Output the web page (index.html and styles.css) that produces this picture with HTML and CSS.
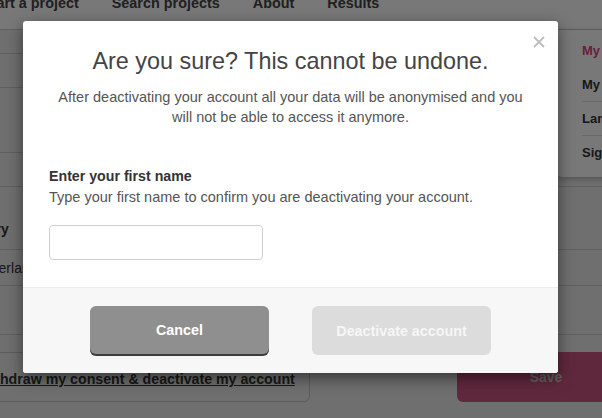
FILE: index.html
```html
<!DOCTYPE html>
<html lang="en">
<head>
<meta charset="utf-8">
<title>Deactivate account</title>
<link rel="stylesheet" href="styles.css">
</head>
<body>
<div class="page">
  <nav class="topnav">
    <a class="nav-item">Start a project</a>
    <a class="nav-item">Search projects</a>
    <a class="nav-item">About</a>
    <a class="nav-item">Results</a>
  </nav>
  <div class="rows">
    <div class="row h24"></div>
    <div class="row h34"></div>
    <div class="row h65"></div>
    <div class="row h34"></div>
    <div class="row h63 label-row"><span class="field-label">Country</span></div>
    <div class="row h36 value-row"><span class="field-value">Netherlands</span></div>
    <div class="row h49"></div>
  </div>
  <div class="actions">
    <div class="withdraw"><a class="withdraw-link">Withdraw my consent &amp; deactivate my account</a></div>
    <button class="save">Save</button>
  </div>
  <div class="menu">
    <div class="menu-item active">My profile</div>
    <div class="menu-item sep">My projects</div>
    <div class="menu-item sep">Language</div>
    <div class="menu-item">Sign out</div>
  </div>
</div>
<div class="backdrop"></div>
<div class="modal">
  <button class="close" aria-label="Close">
    <svg width="12" height="12" viewBox="0 0 12 12"><path d="M1 1 L11 11 M11 1 L1 11" stroke="#bdbdbd" stroke-width="1.8" fill="none"/></svg>
  </button>
  <div class="modal-body">
    <h2 class="modal-title">Are you sure? This cannot be undone.</h2>
    <p class="modal-text">After deactivating your account all your data will be anonymised and you will not be able to access it anymore.</p>
    <div class="form-group">
      <label class="form-label">Enter your first name</label>
      <div class="form-help">Type your first name to confirm you are deactivating your account.</div>
      <input class="form-input" type="text">
    </div>
  </div>
  <div class="modal-footer">
    <button class="btn btn-cancel">Cancel</button>
    <button class="btn btn-deactivate">Deactivate account</button>
  </div>
</div>
</body>
</html>
```
FILE: styles.css
```css
* { box-sizing: border-box; }
html, body { margin: 0; padding: 0; }
body {
  width: 602px;
  height: 418px;
  overflow: hidden;
  position: relative;
  font-family: "Liberation Sans", Arial, Helvetica, sans-serif;
  background: #eaeaea;
}
.page {
  margin-left: -45px;
  width: 700px;
  height: 418px;
  position: relative;
  background: #ececec;
}
.topnav {
  height: 30px;
  background: #ffffff;
  border-bottom: 1px solid #cfcfcf;
  display: flex;
  gap: 33px;
  padding-left: 27px;
}
.nav-item {
  font-weight: bold;
  font-size: 14.4px;
  line-height: 20px;
  color: #444;
  margin-top: -7px;
}
.rows { display: flex; flex-direction: column; }
.row { border-bottom: 1px solid #cccccc; }
.h24 { height: 24px; }
.h34 { height: 34px; }
.h65 { height: 65px; }
.h63 { height: 63px; }
.h36 { height: 36px; }
.h49 { height: 49px; }
.label-row { display: flex; align-items: flex-end; padding-bottom: 12px; }
.field-label { font-weight: bold; font-size: 14px; color: #333; }
.value-row { display: flex; align-items: center; padding-left: 14px; }
.field-value { font-size: 14px; color: #333; }
.actions {
  display: flex;
  align-items: flex-start;
  margin-top: 17px;
}
.withdraw {
  width: 355px;
  height: 50px;
  border: 1px solid #c4c4c4;
  border-radius: 6px;
  padding: 17px 0 0 22px;
}
.withdraw-link {
  font-weight: bold;
  font-size: 14.2px;
  color: #333;
  text-decoration: underline;
}
.save {
  margin-left: 147px;
  width: 178px;
  height: 50px;
  border: 0;
  border-radius: 6px;
  background: #cc5580;
  color: #cfcfcf;
  font-family: inherit;
  font-weight: bold;
  font-size: 14px;
}
.menu {
  position: absolute;
  left: 601px;
  top: 30px;
  width: 120px;
  height: 147px;
  background: #fff;
  border-radius: 0 0 0 6px;
  box-shadow: 0 2px 6px rgba(0,0,0,0.25);
  padding: 4px 0 0 26px;
}
.menu-item {
  font-weight: bold;
  font-size: 13px;
  color: #333;
  height: 34px;
  line-height: 34px;
}
.menu-item.active { color: #e0447e; }
.menu-item.sep { border-bottom: 1px solid #ddd; }
.backdrop {
  position: absolute;
  inset: 0;
  background: rgba(0,0,0,0.53);
}
.modal {
  position: absolute;
  left: 23px;
  top: 21px;
  width: 535px;
  height: 352px;
  background: #fff;
  border-radius: 3px;
  box-shadow: 0 5px 15px rgba(0,0,0,0.5);
  display: flex;
  flex-direction: column;
  overflow: hidden;
}
.close {
  position: absolute;
  right: 13px;
  top: 15px;
  width: 12px;
  height: 12px;
  padding: 0;
  border: 0;
  background: none;
  display: flex;
}
.modal-body {
  flex: 1;
  padding: 25px 26px 0;
}
.modal-title {
  margin: 0;
  font-weight: normal;
  font-size: 23.4px;
  line-height: 30px;
  color: #444;
  text-align: center;
}
.modal-text {
  margin: 11px 0 0;
  font-size: 14.5px;
  line-height: 20px;
  color: #555;
  text-align: center;
}
.form-group {
  margin-top: 39px;
  display: flex;
  flex-direction: column;
  align-items: flex-start;
}
.form-label {
  font-weight: bold;
  font-size: 14.2px;
  line-height: 20px;
  color: #333;
}
.form-help {
  margin-top: 1px;
  font-size: 14.5px;
  line-height: 20px;
  color: #555;
}
.form-input {
  margin-top: 18px;
  width: 214px;
  height: 35px;
  border: 1px solid #cfcfcf;
  border-radius: 4px;
  background: #fff;
}
.modal-footer {
  height: 86px;
  background: #f7f7f7;
  border-top: 1px solid #ececec;
  display: flex;
  justify-content: center;
  align-items: flex-start;
  gap: 43px;
  padding-top: 18px;
}
.btn {
  width: 179px;
  height: 48px;
  border: 0;
  border-radius: 6px;
  font-family: inherit;
  font-weight: bold;
  font-size: 14.3px;
  color: #fff;
}
.btn-cancel {
  background: #8f8f8f;
  box-shadow: 0 2px 0 #3c3c3c;
}
.btn-deactivate {
  height: 49px;
  background: #dcdcdc;
  color: #f6f6f6;
}
```
